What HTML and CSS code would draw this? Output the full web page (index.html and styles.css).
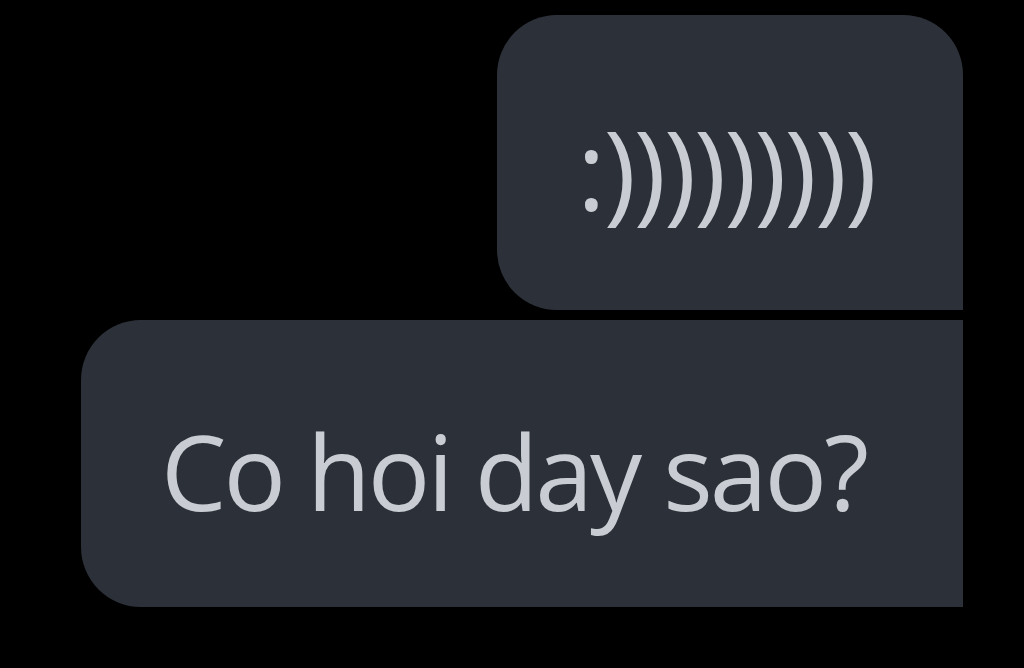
FILE: index.html
```html
<!DOCTYPE html>
<html lang="vi">
<head>
<meta charset="utf-8">
<title>Chat</title>
<link rel="stylesheet" href="styles.css">
</head>
<body>
  <main class="thread">
    <div class="bubble bubble-top"><span class="msg msg-smile">:)))))))))</span></div>
    <div class="bubble bubble-bottom"><span class="msg">Co hoi day sao?</span></div>
  </main>
</body>
</html>
```

FILE: styles.css
```css
html, body {
  margin: 0;
  padding: 0;
  background: #000;
}
body {
  width: 1024px;
  height: 668px;
  overflow: hidden;
}
.thread {
  display: flex;
  flex-direction: column;
  align-items: flex-end;
  gap: 10px;
  padding: 15px 61px 0 0;
}
.bubble {
  display: flex;
  align-items: center;
  box-sizing: border-box;
  background: #2c3139;
  color: #c9cdd3;
  font-family: "Open Sans", "Noto Sans", sans-serif;
  font-size: 104px;
  line-height: 1;
  padding-left: 80px;
}
.bubble-top {
  width: 466px;
  height: 295px;
  padding-top: 12px;
  border-radius: 60px 60px 0 60px;
}
.bubble-bottom {
  width: 882px;
  height: 287px;
  padding-top: 14px;
  border-radius: 60px 0 0 60px;
}
.msg {
  white-space: nowrap;
  letter-spacing: -3px;
}
.msg-smile {
  font-size: 109px;
  letter-spacing: -2px;
}
```
